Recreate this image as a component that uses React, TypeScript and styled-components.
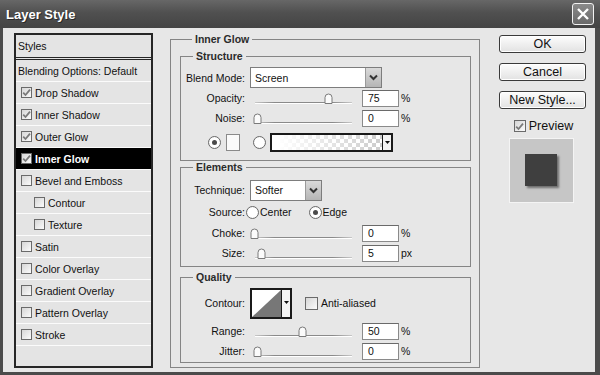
import styled, { createGlobalStyle } from "styled-components";

const GlobalStyle = createGlobalStyle`
  html, body { margin: 0; padding: 0; }
  body {
    background: #4b4b4b;
    font-family: "Liberation Sans", Arial, sans-serif;
    font-size: 10.5px;
    color: #111;
  }
  * { box-sizing: border-box; }
`;

const Window = styled.div`
  width: 600px;
  height: 375px;
  display: flex;
  flex-direction: column;
  background: #4b4b4b;
`;

const TitleBar = styled.div`
  height: 28px;
  flex: none;
  display: flex;
  align-items: center;
  justify-content: space-between;
  padding: 0 6px 0 6px;
  background: linear-gradient(#676767, #505050 45%, #444 100%);
  color: #fff;
  font-size: 13px;
  font-weight: bold;
  text-shadow: 1px 1px 0 #2a2a2a;
`;

const CloseButton = styled.div`
  width: 22px;
  height: 22px;
  border: 1px solid #f2f2f2;
  border-radius: 3px;
  background: linear-gradient(#8a8a8a, #6a6a6a);
  display: flex;
  align-items: center;
  justify-content: center;
`;

const Body = styled.div`
  flex: 1;
  margin: 0 5px 3px 3px;
  background: #e7e7e7;
  display: flex;
  align-items: flex-start;
  padding: 5px 0 0 11px;
`;

/* ---------- left list ---------- */

const StyleList = styled.div`
  width: 139px;
  height: 335px;
  flex: none;
  border: 2px solid #262626;
  background: #e4e4e4;
  display: flex;
  flex-direction: column;
`;

const ListHeader = styled.div`
  height: 25px;
  display: flex;
  align-items: center;
  padding-left: 2px;
  border-bottom: 3px double #262626;
`;

const ListRow = styled.div<{ $selected?: boolean; $indent?: boolean }>`
  height: 22px;
  flex: none;
  display: flex;
  align-items: center;
  gap: 3px;
  padding-left: ${(p) => (p.$indent ? "18px" : "5px")};
  border-bottom: 1px solid #fbfbfb;
  background: ${(p) => (p.$selected ? "#000" : "transparent")};
  color: ${(p) => (p.$selected ? "#fff" : "#111")};
  font-weight: ${(p) => (p.$selected ? "bold" : "normal")};
`;

const BlendRow = styled(ListRow)`
  padding-left: 2px;
`;

const CheckBox = styled.span<{ $size?: number }>`
  width: ${(p) => p.$size ?? 11}px;
  height: ${(p) => p.$size ?? 11}px;
  flex: none;
  border: 1px solid #6a6a6a;
  background: linear-gradient(135deg, #d6d6d6, #fbfbfb);
  display: flex;
  align-items: center;
  justify-content: center;
`;

/* ---------- group boxes ---------- */

const MainGroup = styled.fieldset`
  width: 310px;
  height: 335px;
  flex: none;
  margin: 0 0 0 17px;
  padding: 0 8px 0 9px;
  border: 1px solid #858585;
  min-width: 0;
`;

const Legend = styled.legend`
  padding: 0 3px;
  margin-left: 12px;
  line-height: 12px;
  font-weight: bold;
  color: #2b2b2b;
`;

const SubGroup = styled.fieldset<{ $h: number; $mt: number; $pt: number }>`
  width: 291px;
  height: ${(p) => p.$h}px;
  margin: ${(p) => p.$mt}px 0 0 0;
  padding: ${(p) => p.$pt}px 0 0 0;
  border: 1px solid #858585;
  min-width: 0;
`;

const Row = styled.div<{ $h: number; $mt?: number; $pl?: number }>`
  height: ${(p) => p.$h}px;
  margin-top: ${(p) => p.$mt ?? 0}px;
  padding-left: ${(p) => p.$pl ?? 0}px;
  display: flex;
  align-items: center;
`;

const Label = styled.span`
  width: 64px;
  flex: none;
  text-align: right;
  margin-right: 5px;
  white-space: nowrap;
`;

const Select = styled.div<{ $w: number }>`
  width: ${(p) => p.$w}px;
  height: 21px;
  border: 1px solid #7d7d7d;
  background: #fff;
  display: flex;
  align-items: center;
  justify-content: space-between;
  padding-left: 4px;
`;

const SelectArrow = styled.span`
  width: 16px;
  height: 19px;
  background: linear-gradient(#dadada, #b5b5b5);
  border-left: 1px solid #9a9a9a;
  display: flex;
  align-items: center;
  justify-content: center;
`;

const Slider = styled.div`
  position: relative;
  width: 102px;
  height: 12px;
  margin-top: 2px;
  flex: none;
  &::before {
    content: "";
    position: absolute;
    left: 5px;
    right: 0;
    bottom: 2px;
    height: 1px;
    background: linear-gradient(90deg, #c8c8c8, #8a8a8a 20%, #8a8a8a 80%, #c8c8c8);
    box-shadow: 0 1px 0 #fff;
  }
`;

const Thumb = styled.svg`
  position: absolute;
  top: 0;
  width: 9px;
  height: 11px;
  margin-left: -4px;
`;

const NumberBox = styled.div`
  width: 37px;
  height: 17px;
  margin-left: 10px;
  flex: none;
  background: #fff;
  border: 1px solid #8a8a8a;
  border-top-color: #6a6a6a;
  display: flex;
  align-items: center;
  padding-left: 5px;
`;

const Unit = styled.span`
  margin-left: 2px;
`;

const Radio = styled.span<{ $on?: boolean; $ml?: number }>`
  width: 13px;
  height: 13px;
  flex: none;
  margin-left: ${(p) => p.$ml ?? 0}px;
  border-radius: 50%;
  border: 1px solid #6a6a6a;
  background: radial-gradient(circle, #fff 55%, #e2e2e2);
  display: flex;
  align-items: center;
  justify-content: center;
  &::after {
    content: "";
    width: 5px;
    height: 5px;
    border-radius: 50%;
    background: ${(p) => (p.$on ? "#4a4a4a" : "transparent")};
  }
`;

const ColorSwatch = styled.span`
  width: 14px;
  height: 17px;
  flex: none;
  margin-left: 5px;
  border: 1px solid #8a8a8a;
  background: #fafafa;
`;

const GradientBar = styled.div`
  width: 123px;
  height: 19px;
  flex: none;
  margin-left: 4px;
  border: 2px solid #1a1a1a;
  display: flex;
`;

const GradientFill = styled.span`
  flex: 1;
  background: linear-gradient(90deg, #fff 5%, rgba(255, 255, 255, 0) 95%),
    repeating-conic-gradient(#cfcfcf 0 25%, #fff 0 50%) 0 0 / 8px 8px;
`;

const DropTab = styled.span<{ $w: number; $top?: boolean }>`
  width: ${(p) => p.$w}px;
  flex: none;
  border-left: 1px solid #1a1a1a;
  background: #f4f4f4;
  display: flex;
  align-items: ${(p) => (p.$top ? "flex-start" : "center")};
  padding-top: ${(p) => (p.$top ? "11px" : "0")};
  justify-content: center;
`;

const Option = styled.span<{ $gap: number; $ml?: number }>`
  display: flex;
  align-items: center;
  gap: 1px;
  margin-left: ${(p) => p.$ml ?? 0}px;
  margin-right: ${(p) => p.$gap}px;
`;

const ContourPicker = styled.div`
  width: 42px;
  height: 31px;
  border: 2px solid #1a1a1a;
  display: flex;
  background: #fff;
`;

const CheckOption = styled.span`
  display: flex;
  align-items: center;
  gap: 3px;
  margin-left: 13px;
`;

/* ---------- right column ---------- */

const Side = styled.div`
  width: 87px;
  flex: none;
  margin-left: 19px;
  padding-top: 2px;
  display: flex;
  flex-direction: column;
  align-items: center;
  gap: 10px;
`;

const Button = styled.div`
  width: 87px;
  height: 18px;
  border: 1px solid #3a3a3a;
  border-radius: 3px;
  background: linear-gradient(#fdfdfd, #e2e2e2);
  box-shadow: inset 0 0 0 1px #fff;
  display: flex;
  align-items: center;
  justify-content: center;
  font-size: 12.5px;
  color: #111;
`;

const PreviewCheck = styled.label`
  display: flex;
  align-items: center;
  gap: 3px;
  font-size: 12.5px;
  margin-left: 2px;
`;

const PreviewBox = styled.div`
  width: 65px;
  height: 65px;
  margin: -5px 2px 0 0;
  background: #c6c6c6;
  border: 1px solid #f4f4f4;
  display: flex;
  align-items: center;
  justify-content: center;
`;

const PreviewSquare = styled.div`
  width: 32px;
  height: 32px;
  margin: 0 2px 2px 0;
  background: #3f3f3f;
  box-shadow: 2px 2px 2px #6e6e6e;
`;

/* ---------- small drawings ---------- */

const Check = () => (
  <svg width="9" height="9" viewBox="0 0 9 9">
    <polyline points="1.2,4.6 3.5,7 8,1.6" fill="none" stroke="#7a7a7a" strokeWidth="1.8" />
  </svg>
);

const Chevron = () => (
  <svg width="9" height="7" viewBox="0 0 9 7">
    <polyline points="1,1.5 4.5,5 8,1.5" fill="none" stroke="#333" strokeWidth="2" />
  </svg>
);

const Caret = () => (
  <svg width="5" height="3" viewBox="0 0 5 3">
    <polygon points="0,0 5,0 2.5,3" fill="#111" />
  </svg>
);

function SliderField({ pos, value, unit }: { pos: number; value: string; unit: string }) {
  return (
    <>
      <Slider>
        <Thumb viewBox="0 0 9 11" style={{ left: `${4 + pos * 93}px` }}>
          <path
            d="M1 10.5 V4.5 Q1 1 4.5 1 Q8 1 8 4.5 V10.5 Z"
            fill="#fbfbfb"
            stroke="#7a7a7a"
            strokeWidth="1"
          />
        </Thumb>
      </Slider>
      <NumberBox>{value}</NumberBox>
      <Unit>{unit}</Unit>
    </>
  );
}

const effects = [
  { name: "Drop Shadow", on: true },
  { name: "Inner Shadow", on: true },
  { name: "Outer Glow", on: true },
  { name: "Inner Glow", on: true, selected: true },
  { name: "Bevel and Emboss", on: false },
  { name: "Contour", on: false, indent: true },
  { name: "Texture", on: false, indent: true },
  { name: "Satin", on: false },
  { name: "Color Overlay", on: false },
  { name: "Gradient Overlay", on: false },
  { name: "Pattern Overlay", on: false },
  { name: "Stroke", on: false },
];

export default function App() {
  return (
    <>
      <GlobalStyle />
      <Window>
        <TitleBar>
          <span>Layer Style</span>
          <CloseButton>
            <svg width="14" height="14" viewBox="0 0 14 14">
              <path d="M2 2 L12 12 M12 2 L2 12" stroke="#fff" strokeWidth="2.4" />
            </svg>
          </CloseButton>
        </TitleBar>
        <Body>
          <StyleList>
            <ListHeader>Styles</ListHeader>
            <BlendRow>Blending Options: Default</BlendRow>
            {effects.map((e) => (
              <ListRow key={e.name} $selected={e.selected} $indent={e.indent}>
                <CheckBox>{e.on && <Check />}</CheckBox>
                {e.name}
              </ListRow>
            ))}
          </StyleList>

          <MainGroup>
            <Legend>Inner Glow</Legend>

            <SubGroup $h={111} $mt={5} $pt={5}>
              <Legend>Structure</Legend>
              <Row $h={21}>
                <Label>Blend Mode:</Label>
                <Select $w={132}>
                  Screen
                  <SelectArrow>
                    <Chevron />
                  </SelectArrow>
                </Select>
              </Row>
              <Row $h={20}>
                <Label>Opacity:</Label>
                <SliderField pos={0.8} value="75" unit="%" />
              </Row>
              <Row $h={20}>
                <Label>Noise:</Label>
                <SliderField pos={0.03} value="0" unit="%" />
              </Row>
              <Row $h={22} $mt={3} $pl={27}>
                <Radio $on />
                <ColorSwatch />
                <Radio $ml={13} />
                <GradientBar>
                  <GradientFill />
                  <DropTab $w={9}>
                    <Caret />
                  </DropTab>
                </GradientBar>
              </Row>
            </SubGroup>

            <SubGroup $h={106} $mt={0} $pt={6}>
              <Legend>Elements</Legend>
              <Row $h={22}>
                <Label>Technique:</Label>
                <Select $w={72}>
                  Softer
                  <SelectArrow>
                    <Chevron />
                  </SelectArrow>
                </Select>
              </Row>
              <Row $h={22}>
                <Label>Source:</Label>
                <Option $gap={17} $ml={-4}>
                  <Radio />
                  Center
                </Option>
                <Option $gap={0}>
                  <Radio $on />
                  Edge
                </Option>
              </Row>
              <Row $h={20}>
                <Label>Choke:</Label>
                <SliderField pos={0} value="0" unit="%" />
              </Row>
              <Row $h={20}>
                <Label>Size:</Label>
                <SliderField pos={0.07} value="5" unit="px" />
              </Row>
            </SubGroup>

            <SubGroup $h={92} $mt={4} $pt={4}>
              <Legend>Quality</Legend>
              <Row $h={32}>
                <Label>Contour:</Label>
                <ContourPicker>
                  <svg width="29" height="27" viewBox="0 0 29 27">
                    <polygon points="0,27 29,0 29,27" fill="#777" />
                  </svg>
                  <DropTab $w={9} $top>
                    <Caret />
                  </DropTab>
                </ContourPicker>
                <CheckOption>
                  <CheckBox $size={13} />
                  Anti-aliased
                </CheckOption>
              </Row>
              <Row $h={20} $mt={2}>
                <Label>Range:</Label>
                <SliderField pos={0.52} value="50" unit="%" />
              </Row>
              <Row $h={20}>
                <Label>Jitter:</Label>
                <SliderField pos={0.03} value="0" unit="%" />
              </Row>
            </SubGroup>
          </MainGroup>

          <Side>
            <Button>OK</Button>
            <Button>Cancel</Button>
            <Button>New Style...</Button>
            <PreviewCheck>
              <CheckBox $size={12}>
                <Check />
              </CheckBox>
              Preview
            </PreviewCheck>
            <PreviewBox>
              <PreviewSquare />
            </PreviewBox>
          </Side>
        </Body>
      </Window>
    </>
  );
}
